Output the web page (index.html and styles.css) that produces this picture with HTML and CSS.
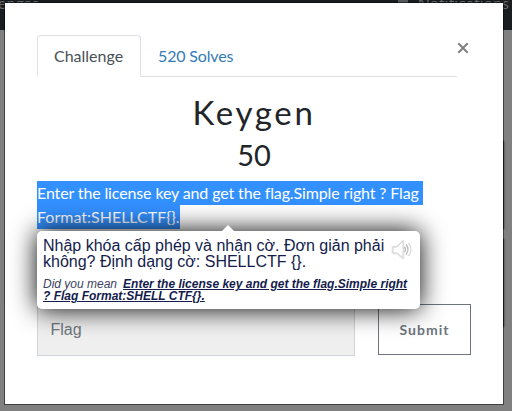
FILE: index.html
```html
<!DOCTYPE html>
<html lang="en">
<head>
<meta charset="utf-8">
<title>Keygen</title>
<link rel="stylesheet" href="styles.css">
</head>
<body>
<header class="navbar"><span class="nav-left">enges</span><span class="nav-right"><i class="nav-icon"></i>Notifications</span></header>
<div class="card-edge first"></div>
<div class="card-edge second"></div>
<main class="modal">
  <div class="top">
    <nav class="tabs">
      <a class="tab active">Challenge</a>
      <a class="tab solves">520 Solves</a>
    </nav>
    <svg class="close" viewBox="0 0 12 12"><path d="M1.3 1.3 10.7 10.7M10.7 1.3 1.3 10.7"/></svg>
  </div>
  <h2 class="name">Keygen</h2>
  <h3 class="value">50</h3>
  <div class="description">
    <div><span class="selected line-one">Enter the license key and get the flag.Simple right ? Flag </span></div>
    <div><span class="selected line-two">Format:SHELLCTF{}.</span></div>
  </div>
  <div class="form">
    <div class="input">Flag</div>
    <div class="submit">Submit</div>
  </div>
  <aside class="bubble">
    <i class="arrow"></i>
    <div class="translation">
      <div><span class="t-one">Nhập khóa cấp phép và nhận cờ. Đơn giản phải</span></div>
      <div><span class="t-two">không? Định dạng cờ: SHELLCTF {}.</span></div>
    </div>
    <div class="suggestion">
      <div><span>Did you mean</span><b class="s-one">Enter the license key and get the flag.Simple right</b></div>
      <div><b>? Flag Format:SHELL CTF{}.</b></div>
    </div>
    <svg class="speaker" viewBox="0 0 22 20"><path class="halo" d="M2 7h4l6-6v17l-6-5H2z"/><path class="cone" d="M2 7h4l6-6v17l-6-5H2z"/><path class="wave" d="M13.5 7q2 2.500 0 5"/><path class="wave" d="M15 4.500q4 5 0 10"/><path class="wave faint" d="M17.500 3q5 6.500 0 13"/></svg>
  </aside>
</main>
</body>
</html>
```
FILE: styles.css
```css
* { box-sizing: border-box; }
body {
  margin: 0;
  height: 411px;
  overflow: hidden;
  position: relative;
  background: #808080;
  font-family: Lato, sans-serif;
  color: #212529;
}
.navbar {
  height: 30px;
  background: #1a1d20;
  color: #65676a;
  font-size: 16px;
  line-height: 20px;
  overflow: hidden;
  display: flex;
  justify-content: space-between;
}
.nav-left { margin: -7px 0 0 -2px; }
.nav-right { display: flex; margin: -7px 3px 0 0; letter-spacing: 0.1px; }
.nav-icon { width: 10px; height: 10px; background: #56585a; margin-right: 10px; }
.card-edge {
  position: absolute;
  left: 490px;
  width: 14px;
  background: #303234;
  box-shadow: 0 0 2px #303234;
}
.first { top: 141px; height: 88px; }
.second { top: 239px; height: 88px; }
.modal {
  position: absolute;
  left: 4px;
  top: 2px;
  width: 500px;
  height: 403px;
  padding: 32px;
  background: #fff;
  border: 1px solid rgba(0, 0, 0, 0.5);
  background-clip: padding-box;
}
.top { display: flex; height: 42px; }
.tabs {
  display: flex;
  width: 420px;
  height: 42px;
  border-bottom: 1px solid #dee2e6;
}
.tab {
  height: 42px;
  padding: 0 16px;
  border: 1px solid transparent;
  border-radius: 4px 4px 0 0;
  font-size: 16px;
  line-height: 40px;
  color: #337ab7;
  white-space: nowrap;
}
.tab.active {
  width: 104px;
  color: #495057;
  background: #fff;
  border-color: #dee2e6 #dee2e6 #fff;
}
.solves { letter-spacing: -0.15px; }
.close { width: 12px; height: 12px; margin-top: 7px; fill: none; stroke: #7f7f7f; stroke-width: 2; }
.name {
  margin: 16px 0 0;
  text-align: center;
  font-size: 33px;
  font-weight: 400;
  line-height: 38px;
  letter-spacing: 2.7px;
}
.value {
  margin: 7px 0 0;
  text-align: center;
  font-size: 29px;
  font-weight: 400;
  line-height: 34px;
}
.description { margin-top: 9px; font-size: 16px; line-height: 24px; }
.description > div { height: 24px; }
.selected { display: block; height: 24px; background: #3390ff; color: #fff; white-space: pre; }
.line-one { width: 386px; letter-spacing: -0.13px; }
.line-two { width: 143px; }
.form { display: flex; justify-content: space-between; margin-top: 75px; }
.input {
  width: 318px;
  height: 52px;
  padding-left: 12.500px;
  border: 1px solid #ced4da;
  background: #efefef;
  font: 16px/50px "Liberation Sans", sans-serif;
  color: #6c757d;
}
.submit {
  width: 93px;
  height: 51px;
  border: 1px solid #6c757d;
  text-align: center;
  font-size: 14px;
  font-weight: 700;
  line-height: 49px;
  letter-spacing: 1px;
  color: #6c757d;
}
.bubble {
  position: absolute;
  left: 32px;
  top: 228px;
  width: 383px;
  height: 78px;
  padding: 7px 6px;
  border-radius: 5px;
  background: #fff;
  box-shadow: 0 0 26px #000;
  color: #141c4c;
  font-family: "Liberation Sans", sans-serif;
  white-space: nowrap;
}
.arrow {
  position: absolute;
  left: 185px;
  top: -6px;
  border: 6px solid transparent;
  border-top: 0;
  border-bottom-color: #fff;
}
.translation { font-size: 16px; line-height: 16px; }
.suggestion { margin-top: 8px; font-size: 12px; line-height: 12px; font-style: italic; }
.suggestion span { color: #3c4260; }
.suggestion b { text-decoration: underline; }
.s-one { margin-left: 6px; }
.speaker {
  position: absolute;
  left: 354px;
  top: 9px;
  width: 22px;
  height: 20px;
  fill: none;
}
.halo { stroke: #eee; stroke-width: 3; stroke-linejoin: round; }
.cone { fill: #fff; stroke: #d0d0d0; stroke-width: 1; }
.wave { stroke: #bbb; stroke-width: 1.4; }
.faint { stroke: #ddd; }
```
